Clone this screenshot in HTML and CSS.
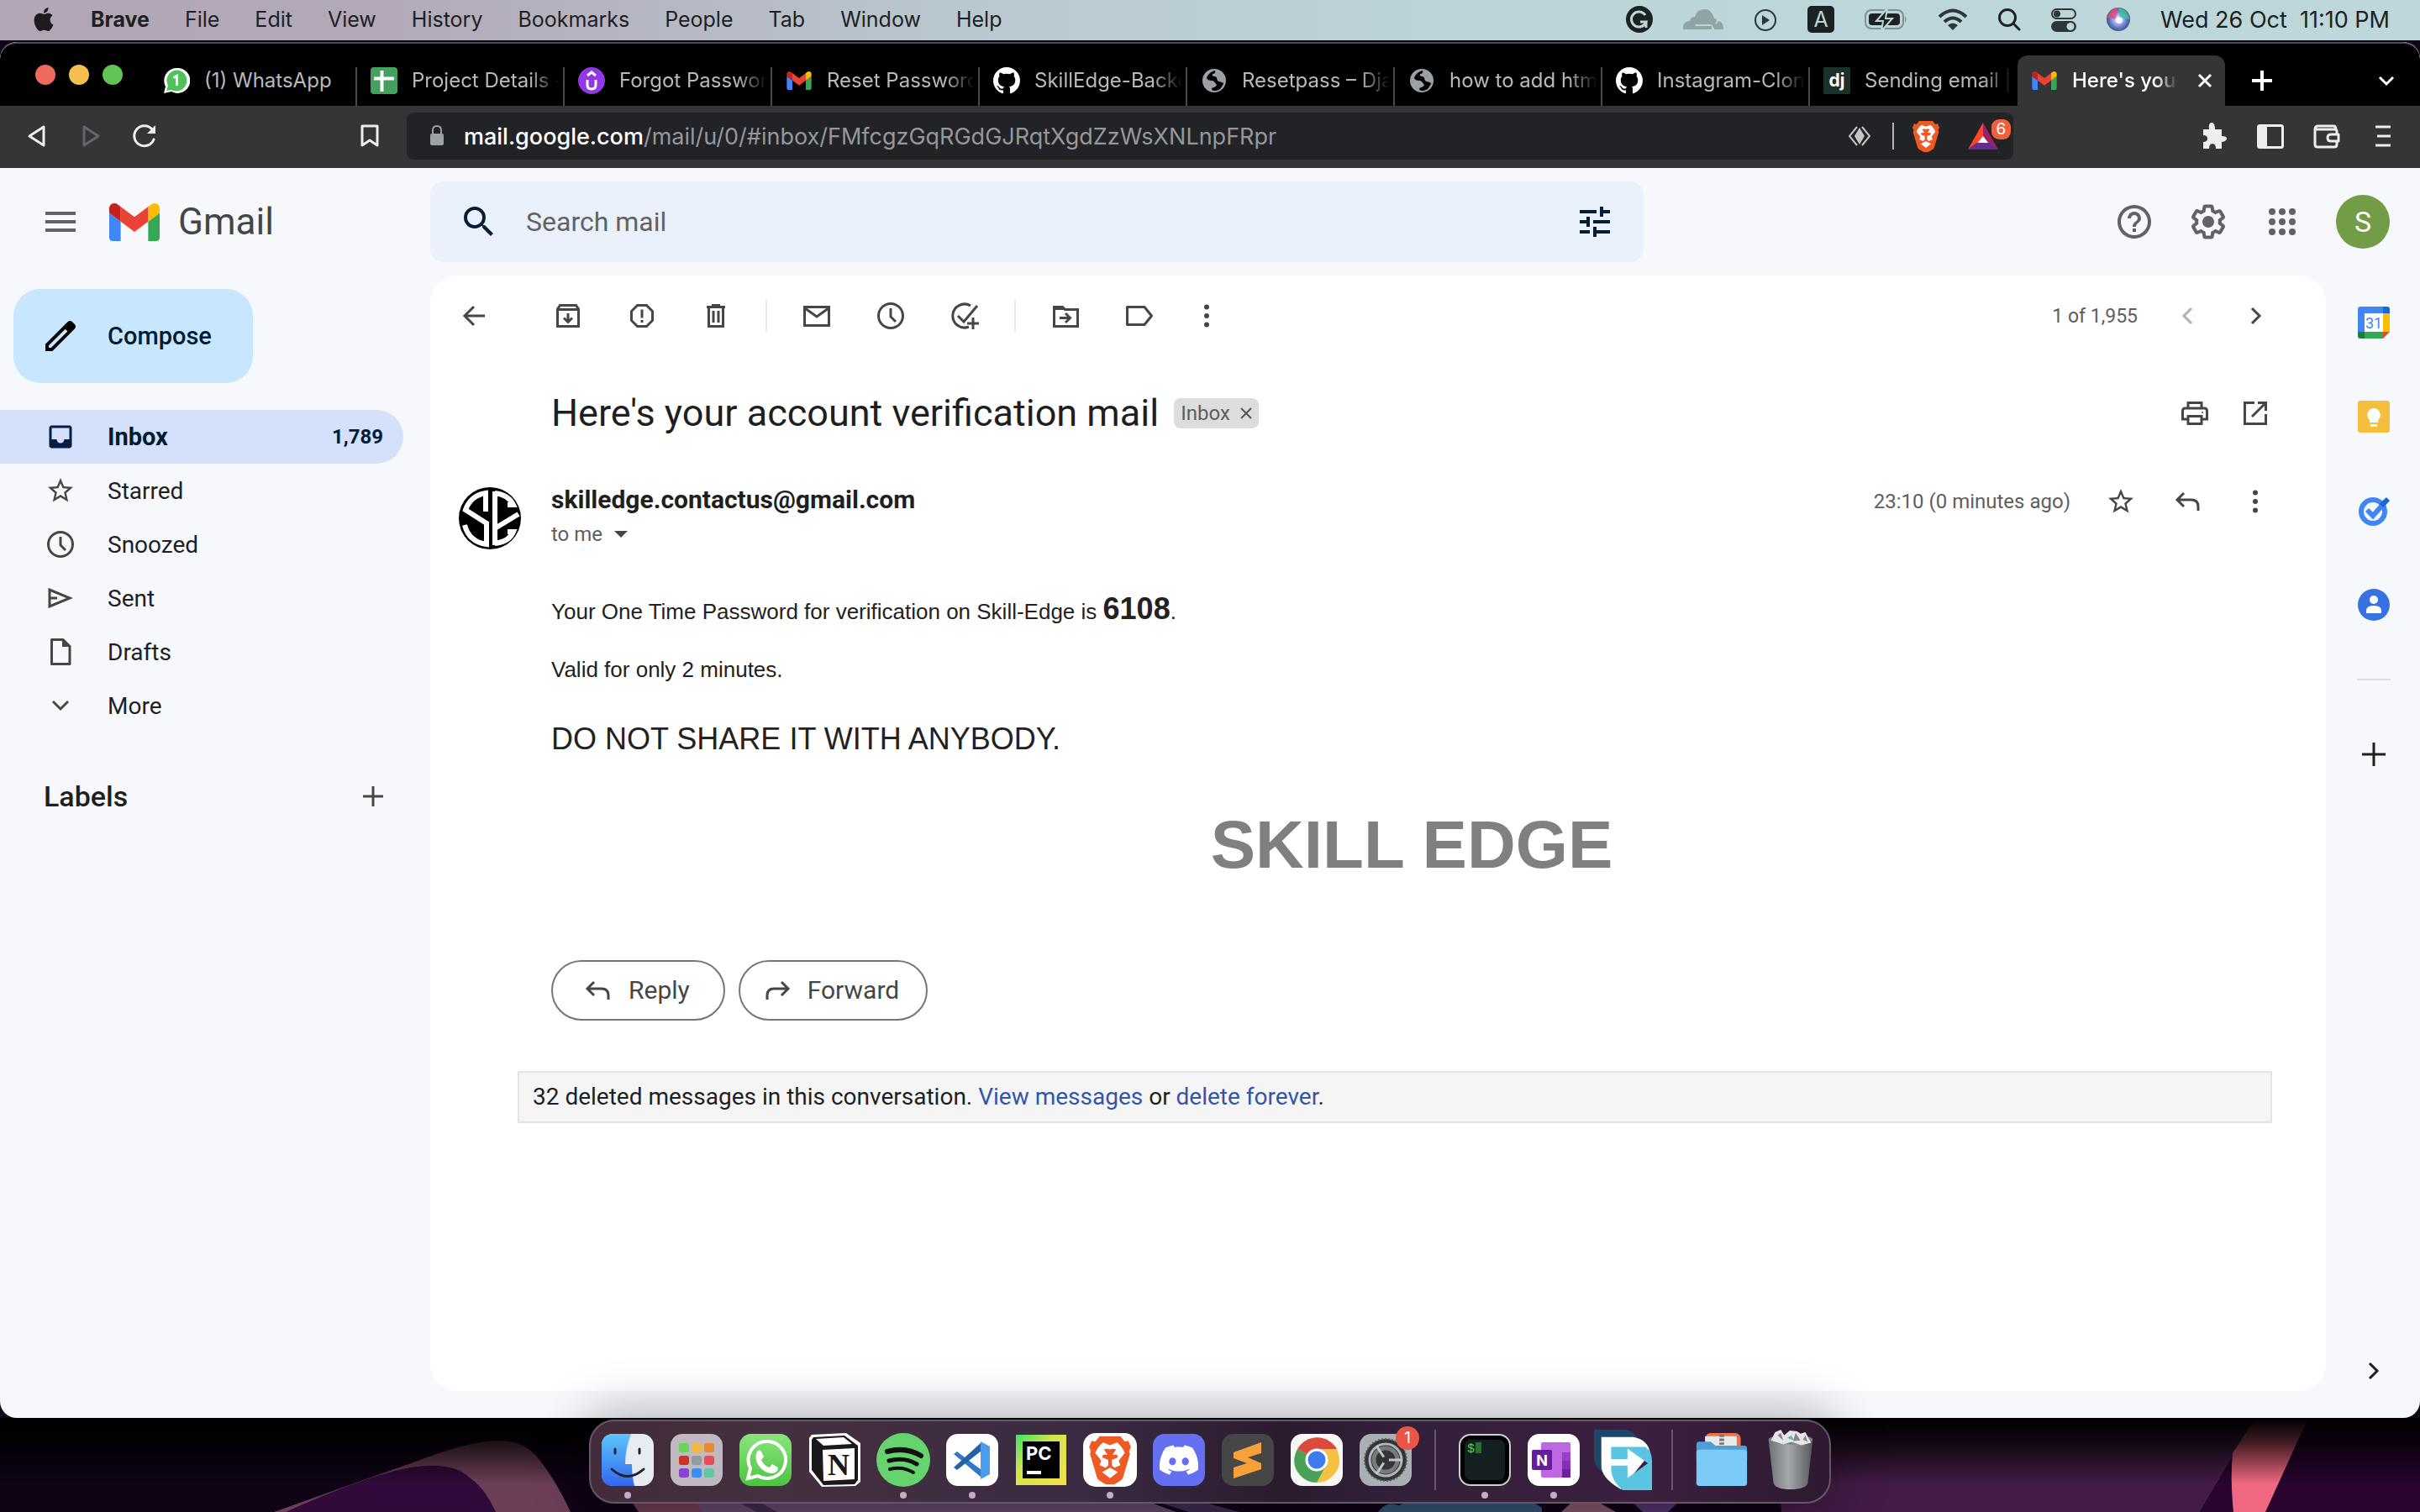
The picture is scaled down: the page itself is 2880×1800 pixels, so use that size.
FILE: index.html
```html
<!DOCTYPE html>
<html lang="en">
<head>
<meta charset="utf-8">
<title>Here's your account verification mail - Gmail</title>
<link rel="stylesheet" href="styles.css">
</head>
<body>
<svg class="defs" aria-hidden="true">
  <symbol id="gmail" viewBox="52 42 88 66"><path fill="#4285f4" d="M58 108h14V74L52 59v43c0 3.32 2.69 6 6 6"/><path fill="#34a853" d="M120 108h14c3.32 0 6-2.69 6-6V59l-20 15"/><path fill="#fbbc04" d="M120 48v26l20-15v-8c0-7.42-8.47-11.65-14.4-7.2"/><path fill="#ea4335" d="M72 74V48l24 18 24-18v26L96 92"/><path fill="#c5221f" d="M52 51v8l20 15V48l-5.6-4.2c-5.94-4.45-14.4-.22-14.4 7.2"/></symbol>
  <symbol id="github" viewBox="0 0 16 16"><path fill="#fff" d="M8 0C3.58 0 0 3.58 0 8c0 3.54 2.29 6.53 5.47 7.59.4.07.55-.17.55-.38 0-.19-.01-.82-.01-1.49-2.01.37-2.53-.49-2.69-.94-.09-.23-.48-.94-.82-1.13-.28-.15-.68-.52-.01-.53.63-.01 1.08.58 1.23.82.72 1.21 1.87.87 2.33.66.07-.52.28-.87.51-1.07-1.78-.2-3.64-.89-3.64-3.95 0-.87.31-1.59.82-2.15-.08-.2-.36-1.02.08-2.12 0 0 .67-.21 2.2.82.64-.18 1.32-.27 2-.27s1.36.09 2 .27c1.53-1.04 2.2-.82 2.2-.82.44 1.1.16 1.92.08 2.12.51.56.82 1.27.82 2.15 0 3.07-1.87 3.75-3.65 3.95.29.25.54.73.54 1.48 0 1.07-.01 1.93-.01 2.2 0 .21.15.46.55.38A8.01 8.01 0 0 0 16 8c0-4.42-3.58-8-8-8z"/></symbol>
  <symbol id="globe" viewBox="0 0 32 32"><circle cx="16" cy="16" r="14" fill="#9aa0a6"/><path fill="#000" d="M17 4c-5 1-9 5-10 9 2 3 4 3 7 3 3 1 3 3 5 5-1 3-4 3-6 4 0 2 1 3 3 3 4 0 8-2 9-5 1-2 2-2 2-4-2-2-5-1-7-3-1-2 0-4-3-5-2 0-4-1-3-3 2 0 4-1 3-4z"/></symbol>
  <symbol id="lion" viewBox="0 0 48 56"><path fill="#ee5a24" d="M12 1h24l5 6 4-1 3 7-2 5 1 3-8 27c-1 3-3 4-5 5l-10 6-10-6c-2-1-4-2-5-5L1 21l1-3-2-5 3-7 4 1z"/><path fill="#fff" d="M24 11l8-3c4 3 7 7 9 12l-7 9 2 5-7 3-3-3v-6l7-3-1-3h-5l4-6-4-1-3 1-3-1-4 1 4 6h-5l-1 3 7 3v6l-3 3-7-3 2-5-7-9c2-5 5-9 9-12z"/><path fill="#fff" d="M24 37l9 5-9 7-9-7z"/></symbol>
  <symbol id="star" viewBox="0 0 24 24"><path fill="currentColor" d="M22 9.24l-7.19-.62L12 2 9.19 8.63 2 9.24l5.46 4.73L5.82 21 12 17.27 18.18 21l-1.63-7.03L22 9.24zM12 15.4l-3.76 2.27 1-4.28-3.32-2.88 4.38-.38L12 6.1l1.71 4.04 4.38.38-3.32 2.88 1 4.28L12 15.4z"/></symbol>
  <symbol id="clock" viewBox="0 0 36 36"><g fill="none" stroke="currentColor" stroke-width="3"><circle cx="18" cy="18" r="14.5"/><path d="M18 9v10l6 6"/></g></symbol>
  <symbol id="dots" viewBox="0 0 36 36"><g fill="currentColor"><circle cx="18" cy="7.500" r="3"/><circle cx="18" cy="18" r="3"/><circle cx="18" cy="28.500" r="3"/></g></symbol>
  <symbol id="reply" viewBox="0 0 36 36"><path fill="none" stroke="currentColor" stroke-width="3" d="M13 8l-8 8 8 8M6 16h16q8 0 8 8v5"/></symbol>
</svg>

<header class="menubar">
  <nav class="menus" aria-label="Menu bar">
    <svg class="apple" viewBox="0 0 24 24"><path d="M12.152 6.896c-.948 0-2.415-1.078-3.96-1.04-2.04.027-3.91 1.183-4.961 3.014-2.117 3.675-.546 9.103 1.519 12.09 1.013 1.454 2.208 3.09 3.792 3.039 1.52-.065 2.09-.987 3.935-.987 1.831 0 2.35.987 3.96.948 1.637-.026 2.676-1.48 3.676-2.948 1.156-1.688 1.636-3.325 1.662-3.415-.039-.013-3.182-1.221-3.22-4.857-.026-3.04 2.48-4.494 2.597-4.559-1.429-2.09-3.623-2.324-4.39-2.376-2-.156-3.675 1.09-4.61 1.09zM15.53 3.83c.843-1.012 1.4-2.427 1.245-3.83-1.207.052-2.662.805-3.532 1.818-.78.896-1.454 2.338-1.273 3.714 1.338.104 2.715-.688 3.559-1.701"/></svg>
    <button class="app-name">Brave</button><button>File</button><button>Edit</button><button>View</button><button>History</button><button>Bookmarks</button><button>People</button><button>Tab</button><button>Window</button><button>Help</button>
  </nav>
  <div class="status">
    <svg width="32" height="32" viewBox="0 0 32 32"><circle cx="16" cy="16" r="16" fill="#1c2223"/><path fill="none" stroke="#bdd6d8" stroke-width="3" d="M23 11a9 9 0 1 0 1 8h-7M24 26v-7"/></svg>
    <svg width="48" height="32" viewBox="0 0 48 32"><path fill="#90a3a5" d="M0 28q-1-9 8-10 1-5 6-5 2-9 12-9 8 0 11 11 3 0 3 3l-2 3-4 1H15l-1 2h20v4zM37 28v-3q0-2 3-3l2-4q6 1 6 10zM32 22l3-1 1-4 2 4 3 1-3 1-2 4-1-4z"/></svg>
    <svg width="28" height="32" viewBox="0 0 28 32"><circle cx="14" cy="17" r="12" fill="none" stroke="#2c3637" stroke-width="2"/><path fill="#2c3637" d="M10 11l9 6-9 6z"/></svg>
    <svg width="32" height="32" viewBox="0 0 32 32"><rect width="32" height="32" rx="5" fill="#1c2223"/><text x="16" y="25" text-anchor="middle" font-size="25" fill="#bdd6d8">A</text></svg>
    <svg width="52" height="32" viewBox="0 0 52 32"><rect x="1" y="5" width="45" height="22" rx="7" fill="none" stroke="#7f9193" stroke-width="2"/><path d="M48 12q3 4 0 8z" fill="#7f9193"/><rect x="5" y="9" width="37" height="14" rx="4" fill="#1c2223"/><path fill="#1c2223" stroke="#bdd6d8" stroke-width="2" d="M27 3L14 18h8l-2 12 13-15h-8z"/></svg>
    <svg width="34" height="32" viewBox="0 0 34 32"><g fill="none" stroke="#2c3637" stroke-width="4"><path d="M1 13q16-15 32 0M7 19q10-9 20 0"/></g><path fill="#2c3637" d="M11 23q6-5 12 0l-6 6z"/></svg>
    <svg width="28" height="32" viewBox="0 0 28 32"><g fill="none" stroke="#1c2223" stroke-width="3" stroke-linecap="round"><circle cx="12" cy="14" r="9.500"/><path d="M19 21l7 7"/></g></svg>
    <svg width="30" height="32" viewBox="0 0 30 32"><rect x="1" y="4" width="28" height="11" rx="5.500" fill="none" stroke="#2c3637" stroke-width="2"/><circle cx="7" cy="9.500" r="4" fill="#2c3637"/><rect y="18" width="30" height="13" rx="6.500" fill="#2c3637"/><circle cx="23" cy="24.500" r="4.500" fill="#bdd6d8"/></svg>
    <svg width="28" height="32" viewBox="0 0 28 32"><defs><radialGradient id="siri"><stop offset="0" stop-color="#fff"/><stop offset=".35" stop-color="#b9b8ee"/><stop offset=".7" stop-color="#5b7fd0"/><stop offset="1" stop-color="#50507a"/></radialGradient></defs><circle cx="14" cy="16" r="14" fill="url(#siri)"/><path fill="#e8487c" opacity=".8" d="M1 14Q4 2 14 2q-1 8-4 14-3-2-9-2z"/><path fill="#38c6a0" opacity=".8" d="M14 2q12 2 13 14l-11-2z"/><circle cx="15" cy="17" r="4" fill="#fff" opacity=".8"/></svg>
    <time class="clock-text">Wed 26 Oct&nbsp; 11:10 PM</time>
  </div>
</header>

<main class="window">
  <div class="tabstrip">
    <div class="lights"><button class="red" aria-label="Close"></button><button class="yellow" aria-label="Minimise"></button><button class="green" aria-label="Zoom"></button></div>
    <nav class="tabs" aria-label="Tabs">
      <a class="tab" href="#"><svg viewBox="0 0 32 32"><path fill="#fff" d="M16 1a15 15 0 1 1-6 28L1 31l2-8A15 15 0 0 1 16 1z"/><path fill="#4fc35a" d="M16 3.500A12.500 12.500 0 1 1 10 27l-6 1 2-6A12.500 12.500 0 0 1 16 3.500z"/><path fill="none" stroke="#fff" stroke-width="3" d="M12.500 12.500l4-2V22"/></svg><span>(1) WhatsApp</span></a>
      <a class="tab" href="#"><svg viewBox="0 0 32 32"><rect width="32" height="32" rx="4" fill="#44a05f"/><path stroke="#fff" stroke-width="4" d="M13.500 4v25M4 13.500h24"/></svg><span>Project Details -</span></a>
      <a class="tab" href="#"><svg viewBox="0 0 32 32"><circle cx="16" cy="16" r="16" fill="#9237e4"/><path fill="none" stroke="#fff" stroke-width="3" d="M11 15v6q0 5 5 5t5-5v-6M11 10l5-4 5 4"/></svg><span>Forgot Password</span></a>
      <a class="tab" href="#"><svg viewBox="0 0 32 32"><use href="#gmail" x="1" y="5" width="30" height="22"/></svg><span>Reset Password</span></a>
      <a class="tab" href="#"><svg viewBox="0 0 32 32"><use href="#github" width="32" height="32"/></svg><span>SkillEdge-Backe</span></a>
      <a class="tab" href="#"><svg viewBox="0 0 32 32"><use href="#globe" width="32" height="32"/></svg><span>Resetpass – Dja</span></a>
      <a class="tab" href="#"><svg viewBox="0 0 32 32"><use href="#globe" width="32" height="32"/></svg><span>how to add html</span></a>
      <a class="tab" href="#"><svg viewBox="0 0 32 32"><use href="#github" width="32" height="32"/></svg><span>Instagram-Clone</span></a>
      <a class="tab last" href="#"><svg viewBox="0 0 32 32"><rect width="32" height="32" rx="2" fill="#1b322b"/><text x="16" y="23" text-anchor="middle" font-size="21" font-weight="700" fill="#fff">dj</text></svg><span>Sending email |</span></a>
      <a class="tab active" href="#"><svg viewBox="0 0 32 32"><use href="#gmail" x="1" y="5" width="30" height="22"/></svg><span>Here's your a</span><svg class="close" viewBox="0 0 20 20"><path stroke="#fff" stroke-width="3" d="M3 3l14 14M17 3L3 17"/></svg></a>
    </nav>
    <button class="newtab" aria-label="New tab"><svg width="26" height="26" viewBox="0 0 26 26"><path stroke="#fff" stroke-width="4" d="M13 1v24M1 13h24"/></svg></button>
    <button class="tabsearch" aria-label="Search tabs"><svg width="20" height="20" viewBox="0 0 20 20"><path fill="none" stroke="#fff" stroke-width="3" d="M2 6l8 8 8-8"/></svg></button>
  </div>

  <div class="navbar">
    <div class="navleft">
      <button aria-label="Back"><svg width="32" height="32" viewBox="0 0 32 32"><path fill="none" stroke="#eee" stroke-width="3" stroke-linejoin="round" d="M24 5v22L7 16z"/></svg></button>
      <button aria-label="Forward"><svg width="32" height="32" viewBox="0 0 32 32"><path fill="none" stroke="#64666e" stroke-width="3" stroke-linejoin="round" d="M8 5v22l17-11z"/></svg></button>
      <button aria-label="Reload"><svg width="32" height="32" viewBox="0 0 32 32"><path fill="none" stroke="#eee" stroke-width="3" stroke-linecap="round" d="M27 20A12 12 0 1 1 25 8"/><path fill="#eee" d="M29 3v10H19z"/></svg></button>
      <button class="bookmark" aria-label="Bookmark"><svg width="32" height="32" viewBox="0 0 32 32"><path fill="none" stroke="#eee" stroke-width="3" stroke-linejoin="round" d="M7 4h18v23l-9-6-9 6z"/></svg></button>
    </div>
    <div class="address">
      <svg width="20" height="28" viewBox="0 0 20 28"><path fill="none" stroke="#9aa0a6" stroke-width="2" d="M5 12V7q0-5 5-5t5 5v5"/><rect x="2" y="11" width="16" height="14" rx="2" fill="#9aa0a6"/></svg>
      <div class="url" role="textbox" aria-label="Address" contenteditable="true" spellcheck="false"><b>mail.google.com</b>/mail/u/0/#inbox/FMfcgzGqRGdGJRqtXgdZzWsXNLnpFRpr</div>
      <svg width="28" height="28" viewBox="0 0 28 28"><path fill="#c4c4c6" d="M14 4l6 10-6 10-6-10z"/><path fill="none" stroke="#c4c4c6" stroke-width="2" d="M11 3L2 14l9 11M17 3l9 11-9 11"/></svg>
      <i class="bar"></i>
      <svg class="shield" width="32" height="38"><use href="#lion" width="32" height="38"/></svg>
      <svg class="rewards" width="52" height="40" viewBox="0 0 52 40"><path fill="#fff" d="M18 10l10 22H8z"/><path fill="#ff4724" d="M18 4v16l-7 9-11 7z"/><path fill="#9e1f63" d="M18 4v16l7 9 11 7z"/><path fill="#662d91" d="M10 28h16l10 8H0z"/><rect x="28" y="0" width="23" height="24" rx="9" fill="#f0603c"/><text x="39.500" y="18" text-anchor="middle" font-size="19" fill="#fff">6</text></svg>
    </div>
    <div class="navright">
      <button aria-label="Extensions"><svg width="34" height="34" viewBox="0 0 34 34"><path fill="#eee" d="M4 9h7q-1-8 3-8t4 8h8v8q6 0 6 3t-6 4v8h-7q0-6-4-6t-4 6H4v-8q5 0 5-4t-5-4z"/></svg></button>
      <button aria-label="Sidebar"><svg width="34" height="34" viewBox="0 0 34 34"><rect x="2.500" y="4.500" width="29" height="26" rx="2" fill="none" stroke="#eee" stroke-width="3"/><path fill="#eee" d="M3 5h10v25H3z"/></svg></button>
      <button aria-label="Wallet"><svg width="34" height="34" viewBox="0 0 34 34"><path fill="none" stroke="#eee" stroke-width="3" stroke-linejoin="round" d="M3 8v19q0 3 3 3h20q3 0 3-3v-4M29 15v-4q0-2-3-2H3q0-4 4-4h18q3 0 3 4M31 15h-9q-4 0-4 4t4 4h9z"/></svg></button>
      <button aria-label="Menu"><svg width="34" height="34" viewBox="0 0 34 34"><path stroke="#eee" stroke-width="3" d="M8 6h18M10 17h16M8 28h18"/></svg></button>
    </div>
  </div>

  <div class="gmail">
    <div class="brand">
      <button aria-label="Main menu"><svg width="48" height="48" viewBox="0 0 24 24"><path fill="#5f6368" d="M3 18h18v-2H3v2zm0-5h18v-2H3v2zm0-7v2h18V6H3z"/></svg></button>
      <svg width="60" height="45"><use href="#gmail" width="60" height="45"/></svg>
      <span>Gmail</span>
    </div>
    <div class="topbar">
      <form class="search" role="search">
        <button type="button" aria-label="Search"><svg width="48" height="48" viewBox="0 0 24 24"><path fill="#041e35" d="M15.5 14h-.79l-.28-.27A6.471 6.471 0 0 0 16 9.500 6.500 6.500 0 1 0 9.500 16c1.610 0 3.090-.59 4.230-1.570l.27.28v.79l5 4.990L20.490 19l-4.990-5zm-6 0C7.010 14 5 11.990 5 9.500S7.010 5 9.500 5 14 7.010 14 9.500 11.990 14 9.500 14z"/></svg></button>
        <input type="text" placeholder="Search mail" aria-label="Search mail">
        <button type="button" aria-label="Search options"><svg width="48" height="48" viewBox="0 0 24 24"><path fill="#041e35" d="M3 17v2h6v-2H3zM3 5v2h10V5H3zm10 16v-2h8v-2h-8v-2h-2v6h2zM7 9v2H3v2h4v2h2V9H7zm14 4v-2H11v2h10zm-6-4h2V7h4V5h-4V3h-2v6z"/></svg></button>
      </form>
      <div class="account">
        <button aria-label="Help"><svg width="48" height="48" viewBox="0 0 24 24"><path fill="#5f6368" d="M11 18h2v-2h-2v2zm1-16C6.480 2 2 6.480 2 12s4.480 10 10 10 10-4.480 10-10S17.520 2 12 2zm0 18c-4.410 0-8-3.590-8-8s3.590-8 8-8 8 3.590 8 8-3.590 8-8 8zm0-14c-2.210 0-4 1.790-4 4h2c0-1.100.9-2 2-2s2 .9 2 2c0 2-3 1.750-3 5h2c0-2.250 3-2.500 3-5 0-2.210-1.790-4-4-4z"/></svg></button>
        <button aria-label="Settings"><svg width="48" height="48" viewBox="0 0 24 24" fill="#5f6368"><path d="M13.85 22.25h-3.7c-.74 0-1.36-.54-1.45-1.27l-.27-1.89c-.27-.14-.53-.29-.79-.46l-1.8.72c-.7.26-1.47-.03-1.81-.65L2.2 15.530c-.35-.66-.2-1.44.36-1.88l1.530-1.190c-.01-.15-.02-.3-.02-.46 0-.15.01-.31.02-.46l-1.520-1.190c-.59-.45-.74-1.260-.37-1.880l1.850-3.190c.34-.62 1.110-.9 1.790-.63l1.810.73c.26-.17.52-.32.78-.46l.27-1.910c.09-.7.71-1.250 1.440-1.250h3.7c.74 0 1.360.54 1.450 1.270l.27 1.890c.27.14.53.29.79.46l1.8-.72c.71-.26 1.480.03 1.820.65l1.840 3.180c.36.66.2 1.440-.36 1.880l-1.520 1.190c.01.15.02.3.02.46s-.01.31-.02.46l1.520 1.190c.56.45.72 1.230.37 1.860l-1.860 3.220c-.34.62-1.110.9-1.800.63l-1.800-.72c-.26.17-.52.32-.78.46l-.27 1.910c-.1.68-.72 1.220-1.460 1.220zm-3.230-2h2.760l.37-2.550.53-.22c.44-.18.88-.44 1.340-.78l.45-.34 2.380.96 1.380-2.4-2.030-1.580.07-.56c.03-.26.06-.51.06-.78s-.03-.53-.06-.78l-.07-.56 2.030-1.580-1.390-2.4-2.390.96-.45-.35c-.42-.32-.87-.58-1.330-.77l-.52-.22-.37-2.550h-2.760l-.37 2.550-.53.21c-.44.19-.88.44-1.340.79l-.45.33-2.380-.95-1.390 2.390 2.030 1.580-.07.56a7 7 0 0 0-.06.79c0 .26.02.53.06.78l.07.56-2.030 1.580 1.380 2.4 2.390-.96.45.35c.43.33.86.58 1.330.77l.53.22.38 2.550z"/><circle cx="12" cy="12" r="3.500"/></svg></button>
        <button aria-label="Google apps"><svg width="48" height="48" viewBox="0 0 24 24" fill="#5f6368"><circle cx="6" cy="6" r="2"/><circle cx="12" cy="6" r="2"/><circle cx="18" cy="6" r="2"/><circle cx="6" cy="12" r="2"/><circle cx="12" cy="12" r="2"/><circle cx="18" cy="12" r="2"/><circle cx="6" cy="18" r="2"/><circle cx="12" cy="18" r="2"/><circle cx="18" cy="18" r="2"/></svg></button>
        <button class="me" aria-label="Account">S</button>
      </div>
    </div>

    <aside class="sidebar">
      <button class="compose"><svg width="48" height="48" viewBox="0 0 24 24"><path d="M20.410 4.940l-1.350-1.350c-.78-.78-2.050-.78-2.830 0L3 16.820V21h4.180L20.410 7.770c.79-.78.79-2.050 0-2.830zm-14 14.120L5 19v-1.360l9.820-9.820 1.410 1.410-9.820 9.830z"/></svg>Compose</button>
      <nav class="folders" aria-label="Folders">
        <a class="current" href="#"><svg viewBox="0 0 24 24"><path fill="#041e49" d="M19 3H5c-1.100 0-2 .9-2 2v14c0 1.100.9 2 2 2h14c1.100 0 2-.9 2-2V5c0-1.100-.9-2-2-2zm0 11h-4c0 1.660-1.350 3-3 3s-3-1.340-3-3H5V5h14z"/></svg><span>Inbox</span><em>1,789</em></a>
        <a href="#"><svg viewBox="0 0 24 24"><use href="#star"/></svg><span>Starred</span></a>
        <a href="#"><svg viewBox="0 0 36 36"><use href="#clock"/></svg><span>Snoozed</span></a>
        <a href="#"><svg viewBox="0 0 36 36"><path fill="none" stroke="currentColor" stroke-width="3" d="M5 8v20l24-10zM5 18h9"/></svg><span>Sent</span></a>
        <a href="#"><svg viewBox="0 0 36 36"><path fill="none" stroke="currentColor" stroke-width="3" stroke-linejoin="round" d="M7.500 3.500H21l8 8v21H7.500z"/><path fill="currentColor" d="M20 3l9 9h-9z"/></svg><span>Drafts</span></a>
        <a href="#"><svg viewBox="0 0 36 36"><path fill="none" stroke="currentColor" stroke-width="3" d="M9 13l9 9 9-9"/></svg><span>More</span></a>
      </nav>
      <div class="labels"><h2>Labels</h2><button aria-label="Create label"><svg width="36" height="36" viewBox="0 0 36 36"><path stroke="#444746" stroke-width="3" d="M18 6v24M6 18h24"/></svg></button></div>
    </aside>

    <section class="card">
      <div class="toolbar">
        <button class="back" aria-label="Back to inbox"><svg viewBox="0 0 36 36"><path d="M18 7L7 18l11 11M7 18h24"/></svg></button>
        <button aria-label="Archive"><svg viewBox="0 0 36 36"><path d="M5.500 10l3-4.500h19l3 4.500v20.500h-25zM5 10.500h26M18 15v10M13 20.500l5 5 5-5"/></svg></button>
        <button aria-label="Report spam"><svg viewBox="0 0 36 36"><path d="M12.500 5.500h11l7 7v11l-7 7h-11l-7-7v-11zM18 10.500v10M18 23v3"/></svg></button>
        <button aria-label="Delete"><svg viewBox="0 0 36 36"><path d="M9.500 9v21.500h17V9M7 7.500h22M13 5.500h10M15 12v14M21 12v14"/></svg></button>
        <i></i>
        <button aria-label="Mark as unread"><svg viewBox="0 0 36 36"><path d="M3.500 7.500h29v22h-29zM4 9l14 10L32 9"/></svg></button>
        <button aria-label="Snooze"><svg viewBox="0 0 36 36"><use href="#clock"/></svg></button>
        <button aria-label="Add to tasks"><svg viewBox="0 0 36 36"><path d="M25 6A14 14 0 1 0 23 31M10 18l7 7L33 6M28 20v14M21 27h14"/></svg></button>
        <i></i>
        <button aria-label="Move to"><svg viewBox="0 0 36 36"><path d="M4.500 7.500h10l3 3h15v20h-28zM11 20.500h12M18 15l5.500 5.500L18 26"/><path class="solid" d="M4 7h11l3 4H4z"/></svg></button>
        <button aria-label="Labels"><svg viewBox="0 0 36 36"><path stroke-linejoin="round" d="M3.500 7.500H24L32.500 18 24 28.500H3.500z"/></svg></button>
        <button class="more" aria-label="More"><svg viewBox="0 0 36 36"><use href="#dots"/></svg></button>
        <span class="count">1 of 1,955</span>
        <button class="pager dim" aria-label="Newer"><svg viewBox="0 0 36 36"><path d="M22 9l-9 9 9 9"/></svg></button>
        <button class="pager" aria-label="Older"><svg viewBox="0 0 36 36"><path d="M14 9l9 9-9 9"/></svg></button>
      </div>

      <div class="subject">
        <h1>Here's your account verification mail</h1>
        <button class="chip">Inbox <svg viewBox="0 0 14 14"><path stroke="#555" stroke-width="2" d="M1 1l12 12M13 1L1 13"/></svg></button>
        <div class="tools">
          <button aria-label="Print"><svg viewBox="0 0 36 36"><path d="M10 12V5.500h16V12M9 25H3.500V15q0-3 3-3h23q3 0 3 3v10H27M10 21.500h16v9H10z"/><circle class="solid" cx="27" cy="17" r="1"/></svg></button>
          <button aria-label="Open in new window"><svg viewBox="0 0 36 36"><path d="M17 5.500H5.500v25h25V19M21 5.500h9.500V15M30 6L14 22"/></svg></button>
        </div>
      </div>

      <article class="message">
        <div class="avatar"><svg width="74" height="74" viewBox="0 0 74 74"><circle cx="37" cy="37" r="37"/><g fill="none" stroke="#fff" stroke-width="6"><path d="M32 29V7Q14 10 8 27l25 16v25Q12 65 7 45"/><path d="M43 5v64M43 7q16 2 22 14h-7M71 32L43 49M43 67q17-2 22-14h-7"/></g></svg></div>
        <div class="sender">
          <h3>skilledge.contactus@gmail.com</h3>
          <button>to me <svg viewBox="0 0 16 8"><path fill="#444746" d="M0 0h16L8 8z"/></svg></button>
        </div>
        <div class="meta">
          <time>23:10 (0 minutes ago)</time>
          <button aria-label="Star"><svg viewBox="0 0 24 24"><use href="#star"/></svg></button>
          <button aria-label="Reply"><svg viewBox="0 0 36 36"><use href="#reply"/></svg></button>
          <button aria-label="More"><svg viewBox="0 0 36 36"><use href="#dots"/></svg></button>
        </div>
        <div class="body">
          <p>Your One Time Password for verification on Skill-Edge is <b>6108</b>.</p>
          <p class="valid">Valid for only 2 minutes.</p>
          <p class="warn">DO NOT SHARE IT WITH ANYBODY.</p>
          <h2>SKILL EDGE</h2>
          <div class="actions">
            <button><svg viewBox="0 0 36 36"><use href="#reply"/></svg>Reply</button>
            <button><svg viewBox="0 0 36 36"><path d="M23 8l8 8-8 8M30 16H14q-8 0-8 8v5"/></svg>Forward</button>
          </div>
        </div>
      </article>
      <p class="notice">32 deleted messages in this conversation. <a href="#">View messages</a> or <a href="#">delete forever</a>.</p>
    </section>

    <aside class="addons">
      <button aria-label="Calendar"><svg width="40" height="40" viewBox="0 0 40 40"><path fill="#4285f4" d="M4 1h27v8H9v22H1V4q0-3 3-3z"/><path fill="#1967d2" d="M31 1h5q3 0 3 3v5h-8z"/><path fill="#fbbc04" d="M31 9h8v22h-8z"/><path fill="#34a853" d="M9 31h22v8H9z"/><path fill="#188038" d="M1 31h8v8H4q-3 0-3-3z"/><path fill="#ea4335" d="M31 31h8l-8 8z"/><path fill="#fff" d="M9 9h22v22H9z"/><text x="20" y="27" text-anchor="middle" font-size="18" fill="#4285f4">31</text></svg></button>
      <button aria-label="Keep"><svg width="40" height="40" viewBox="0 0 40 40"><rect x="1" y="1" width="38" height="38" rx="3" fill="#f4be3e"/><path fill="#fff" d="M20 10a8 8 0 0 1 5 14v3H15v-3a8 8 0 0 1 5-14zM16 29h8v3h-8z"/></svg></button>
      <button aria-label="Tasks"><svg width="40" height="40" viewBox="0 0 40 40"><circle cx="19" cy="21" r="14" fill="none" stroke="#4285f4" stroke-width="6"/><path fill="none" stroke="#4285f4" stroke-width="6" d="M12 19l7 7L34 9"/><path stroke="#1967d2" stroke-width="6" d="M29 14l8-8"/></svg></button>
      <button aria-label="Contacts"><svg width="40" height="40" viewBox="0 0 40 40"><circle cx="20" cy="20" r="19" fill="#3872e0"/><circle cx="20" cy="14" r="5" fill="#fff"/><path fill="#fff" d="M11 30v-3q0-6 9-6t9 6v3z"/></svg></button>
      <hr>
      <button class="add" aria-label="Get add-ons"><svg width="36" height="36" viewBox="0 0 36 36"><path stroke="#1f1f1f" stroke-width="3" d="M18 4v28M4 18h28"/></svg></button>
      <button class="hide" aria-label="Hide side panel"><svg width="36" height="36" viewBox="0 0 36 36"><path fill="none" stroke="#1f1f1f" stroke-width="3" d="M13 9l9 9-9 9"/></svg></button>
    </aside>
  </div>
</main>

<footer class="desktop">
  <svg class="wallpaper" viewBox="0 0 2880 112" preserveAspectRatio="none">
    <defs><linearGradient id="shade" x2="0" y2="1"><stop offset="0" stop-color="#000"/><stop offset=".25" stop-color="#000" stop-opacity=".75"/><stop offset=".7" stop-opacity="0"/></linearGradient></defs>
    <rect width="2880" height="112" fill="#0f0316"/>
    <path fill="#6d3e58" d="M326 112L500 50Q560 27 595 27 625 27 642 50 662 75 679 112z"/><path fill="#300a3a" d="M340 112Q420 76 470 63 535 47 560 72 578 85 590 112z"/>
    <path fill="#6b3c50" d="M745 90h90l15 22H760z"/><path fill="#5f4566" d="M820 90h520l60 22H835z"/><path fill="#3c2a4c" d="M860 90h25l40 22h-25zM1345 90h50l80 22h-60z"/>
    <path fill="#33506f" d="M1640 112q10-14 25-8 20-12 35-2 20-12 40-3 22-12 45 0 30-8 50 8v5z"/><path fill="#7d5366" d="M1858 112l15-14h25l25 14z"/><path fill="#50306a" d="M1940 98h60l-15 14h-30z"/>
    <path fill="#421c45" d="M2110 0h574l-66 112H2120z"/><path fill="#28042f" d="M2684 0h196v112H2618z"/><path fill="#ef6780" d="M2684 0h63l-51 112h-38q-4-40-1-70z"/>
    <rect width="2880" height="112" fill="url(#shade)"/>
  </svg>
  <nav class="dock" aria-label="Dock">
    <button class="run" aria-label="Finder"><svg viewBox="0 0 64 64"><defs><linearGradient id="fb" x2="0" y2="1"><stop stop-color="#5cc6fa"/><stop offset="1" stop-color="#3466ee"/></linearGradient></defs><rect x="1" y="1" width="62" height="62" rx="14" fill="#e7ebf2"/><path fill="url(#fb)" d="M15 1h21q-7 18-7 36h8q0 14 3 26H15Q1 63 1 49V15Q1 1 15 1z"/><path fill="none" stroke="#1c2430" stroke-width="3" stroke-linecap="round" d="M17 19v5M46 19v5M13 43q19 17 38 0"/></svg></button>
    <button aria-label="Launchpad"><svg viewBox="0 0 64 64"><rect x="1" y="1" width="62" height="62" rx="14" fill="#c1b9c1"/><rect x="11" y="12" width="12" height="11" rx="3" fill="#6bd457"/><rect x="26" y="12" width="12" height="11" rx="3" fill="#f4b93c"/><rect x="41" y="12" width="12" height="11" rx="3" fill="#e58b33"/><rect x="11" y="27" width="12" height="11" rx="3" fill="#ce3328"/><rect x="26" y="27" width="12" height="11" rx="3" fill="#959b9d"/><rect x="41" y="27" width="12" height="11" rx="3" fill="#ea4a5e"/><rect x="11" y="42" width="12" height="11" rx="3" fill="#8b43cf"/><rect x="26" y="42" width="12" height="11" rx="3" fill="#3690ef"/><rect x="41" y="42" width="12" height="11" rx="3" fill="#62c6a4"/></svg></button>
    <button aria-label="WhatsApp"><svg viewBox="0 0 64 64"><defs><linearGradient id="wg" x2="0" y2="1"><stop stop-color="#8ae57c"/><stop offset="1" stop-color="#4cc341"/></linearGradient></defs><rect x="1" y="1" width="62" height="62" rx="14" fill="url(#wg)"/><path fill="none" stroke="#fff" stroke-width="4" d="M33 10a22 22 0 1 1-10 41l-12 3 3-12A22 22 0 0 1 33 10z"/><path fill="#fff" d="M22 22q3-3 5 0l3 6-3 4q3 7 10 9l3-4 7 4q0 6-7 7-9 0-16-9-6-9-2-17z"/></svg></button>
    <button aria-label="Notion"><svg viewBox="0 0 64 64"><path fill="#fff" d="M5 2L46 0l17 12v46l-6 5-40 1L2 46V6z"/><path fill="#191919" d="M7 5l37-2 16 12v41l-4 5-37 1L5 44V8z"/><path fill="#fff" d="M10 7l33-2 10 8-34 2zM18 20l38-2v37l-37 2z"/><text x="37" y="50" text-anchor="middle" class="serif" font-size="36" font-weight="700" fill="#191919">N</text></svg></button>
    <button class="run" aria-label="Spotify"><svg viewBox="0 0 64 64"><circle cx="32" cy="32" r="32" fill="#65d46e"/><g fill="none" stroke="#111" stroke-linecap="round"><path stroke-width="6" d="M13 22q22-6 40 5"/><path stroke-width="5" d="M15 33q18-5 33 4"/><path stroke-width="4" d="M16 43q15-4 28 4"/></g></svg></button>
    <button class="run" aria-label="Code"><svg viewBox="0 0 64 64"><rect x="1" y="1" width="62" height="62" rx="14" fill="#fff"/><path fill="#3178c6" d="M10 25l4-3 29 22v9z"/><path fill="#2561a4" d="M10 41l4 3 29-23V11z"/><path fill="#4a9dea" d="M42 10l11 6v33l-11 6z"/></svg></button>
    <button aria-label="PyCharm"><svg viewBox="0 0 64 64"><defs><linearGradient id="pc" x2="1" y2="1"><stop stop-color="#3be36b"/><stop offset=".4" stop-color="#d5e34b"/><stop offset="1" stop-color="#f5e04b"/></linearGradient></defs><path fill="url(#pc)" d="M2 2h60v60H2z"/><path d="M10 10h44v44H10z"/><text x="14" y="32" font-size="22" font-weight="700" fill="#fff">PC</text><path fill="#fff" d="M15 45h17v4H15z"/></svg></button>
    <button class="run" aria-label="Brave"><svg viewBox="0 0 64 64"><rect width="64" height="64" rx="15" fill="#fff"/><use href="#lion" x="7" y="3" width="50" height="58"/></svg></button>
    <button aria-label="Discord"><svg viewBox="0 0 64 64"><rect x="1" y="1" width="62" height="62" rx="14" fill="#6570f0"/><path fill="#fff" transform="translate(9 9) scale(1.920)" d="M20.317 4.370a19.791 19.791 0 00-4.885-1.515.074.074 0 00-.079.037c-.211.375-.445.865-.608 1.250-1.845-.276-3.680-.276-5.487 0-.164-.393-.406-.874-.618-1.250a.077.077 0 00-.079-.037 19.736 19.736 0 00-4.885 1.515.070.070 0 00-.032.028C.533 9.046-.319 13.580.099 18.058a.082.082 0 00.031.056c2.053 1.508 4.041 2.423 5.993 3.029a.078.078 0 00.084-.028c.462-.630.873-1.295 1.226-1.994a.076.076 0 00-.042-.106c-.653-.248-1.274-.550-1.872-.892a.077.077 0 01-.008-.128c.126-.094.252-.192.372-.291a.074.074 0 01.078-.011c3.928 1.793 8.180 1.793 12.061 0a.074.074 0 01.079.010c.120.099.246.198.373.292a.077.077 0 01-.007.128 12.299 12.299 0 01-1.873.891.077.077 0 00-.041.107c.360.698.772 1.363 1.225 1.993a.076.076 0 00.084.029c1.961-.607 3.950-1.522 6.002-3.029a.077.077 0 00.031-.055c.500-5.177-.838-9.674-3.549-13.660a.061.061 0 00-.031-.029zM8.020 15.331c-1.183 0-2.157-1.086-2.157-2.419 0-1.333.956-2.419 2.157-2.419 1.211 0 2.176 1.095 2.157 2.419 0 1.333-.956 2.419-2.157 2.419zm7.975 0c-1.183 0-2.157-1.086-2.157-2.419 0-1.333.955-2.419 2.157-2.419 1.211 0 2.176 1.095 2.157 2.419 0 1.333-.946 2.419-2.157 2.419z"/></svg></button>
    <button aria-label="Sublime Text"><svg viewBox="0 0 64 64"><rect x="1" y="1" width="62" height="62" rx="14" fill="#464646"/><path fill="#f7a13a" d="M15 23l33-12v13l-16 5 16 7v7L15 54V41l16-5-16-6z"/></svg></button>
    <button aria-label="Chrome"><svg viewBox="0 0 64 64"><rect x="1" y="1" width="62" height="62" rx="14" fill="#f7f7f5"/><path fill="#dc4a3d" d="M32 32L9 19A27 27 0 0 1 56 19z"/><path fill="#f4c142" d="M32 19h24q9 21-8 35-7 5-16 5l11-20z"/><path fill="#4ba159" d="M9 19q-9 17 3 31 8 9 20 9l11-20-11-7z"/><circle cx="32" cy="32" r="13.500" fill="#fff"/><circle cx="32" cy="32" r="10.500" fill="#3d7cea"/></svg></button>
    <button class="badged" aria-label="System Preferences"><svg viewBox="0 0 64 64"><rect x="1" y="1" width="62" height="62" rx="14" fill="#a9b0b4"/><circle cx="32" cy="32" r="25" fill="#333537" stroke="#5c5f61" stroke-width="2" stroke-dasharray="2 2"/><circle cx="32" cy="32" r="19" fill="none" stroke="#b1b5b7" stroke-width="3"/><circle cx="32" cy="32" r="14" fill="none" stroke="#777b7d" stroke-width="5"/><path stroke="#c2c6c8" stroke-width="3" d="M32 32L21 15M32 32h20M32 32L21 49"/><circle cx="32" cy="32" r="4" fill="#333"/></svg><span class="badge">1</span></button>
    <i></i>
    <button class="run" aria-label="Terminal"><svg viewBox="0 0 64 64"><rect x="1" y="1" width="62" height="62" rx="14" fill="#c8d0d4"/><rect x="3" y="3" width="58" height="58" rx="12"/><rect x="8" y="8" width="48" height="48" rx="7" fill="#151e20"/><text x="11" y="23" class="mono" font-size="15" fill="#56d353">$</text><path fill="#2c6f2b" d="M21 11h7v13h-7z"/></svg></button>
    <button class="run" aria-label="OneNote"><svg viewBox="0 0 64 64"><rect x="1" y="1" width="62" height="62" rx="14" fill="#fff"/><rect x="17" y="11" width="35" height="42" rx="2" fill="#bf67e2"/><path fill="#9a3fc9" d="M42 23h10v10H42z"/><path fill="#8330b8" d="M42 33h10v10H42z"/><path fill="#6e20a0" d="M42 43h10v10H42z"/><rect x="6" y="20" width="24" height="24" rx="2" fill="#641d9e"/><text x="18" y="39" text-anchor="middle" font-size="18" font-weight="700" fill="#fff">N</text></svg></button>
    <button aria-label="Remote transfer"><svg class="large" viewBox="0 0 72 76"><path fill="#1c4569" d="M1 1h40q10 2 16 16L22 60Q2 50 1 36z"/><path fill="#fff" d="M10 10h39q18 3 21 20L34 74Q9 60 10 44z"/><path fill="#59c5e3" d="M22 22h42q8 6 8 16v37H36q-14-12-14-26v-4h20v15l25-18-25-18v13H22z"/></svg></button>
    <i></i>
    <button aria-label="Downloads"><svg viewBox="0 0 66 68"><rect x="12" y="0" width="45" height="30" rx="7" fill="#ef7148"/><path fill="#e9e9e9" d="M12 4h40v20H12z"/><path stroke="#777" stroke-width="6" stroke-dasharray="3 2" d="M33 2v20"/><path fill="#4d9fd7" d="M4 11h15l6 5h37q3 0 3 4v14H1V15q0-4 3-4z"/><rect x="1" y="21" width="64" height="46" rx="4" fill="#7bcaf8"/></svg></button>
    <button aria-label="Trash"><svg class="large" viewBox="0 0 64 76"><defs><linearGradient id="tr"><stop stop-color="#6d7274"/><stop offset=".45" stop-color="#a5a8aa"/><stop offset="1" stop-color="#55595b"/></linearGradient></defs><path fill="url(#tr)" d="M5 13h54l-6 53q-2 8-21 8t-21-8z"/><ellipse cx="32" cy="13" rx="27" ry="6" fill="#7c8082"/><path fill="#e6e6e6" d="M8 14l5-10 7-3 4 7 7-6 9 1 4 3 6-2 7 13-12 3-12-4-10 3z"/><path fill="#868686" d="M16 8l4-3 3 9zM38 5l6 9-9 1zM50 8l3 8-6-3z"/><path fill="#5bb0d8" d="M28 11l5-3 3 6z"/></svg></button>
  </nav>
</footer>
</body>
</html>
```
FILE: styles.css
```css
* { box-sizing: border-box; }
body {
  margin: 0;
  min-height: 100vh;
  display: flex;
  flex-direction: column;
  background: #120419;
  color: #1f1f1f;
  font-family: Roboto, "Liberation Sans", sans-serif;
  font-size: 28px;
  overflow-x: hidden;
}
button { margin: 0; padding: 0; border: 0; background: none; font: inherit; color: inherit; display: flex; align-items: center; justify-content: center; }
a { color: inherit; text-decoration: none; }
h1, h2, h3, p { margin: 0; font-weight: 400; }
svg { flex: none; display: block; }
.defs { width: 0; height: 0; position: absolute; }

/* System menu bar */
.menubar {
  height: 48px;
  display: flex;
  justify-content: space-between;
  align-items: center;
  padding: 0 36px 2px 38px;
  background: linear-gradient(90deg, #b2a6b6 0, #b3a9b9 16%, #b9c8cf 40%, #bcd5d8 62%, #bdd7da 100%);
  font-family: Inter, sans-serif;
  font-size: 25px;
  color: #1c2223;
}
.menus, .status { display: flex; align-items: center; }
.menus { gap: 42px; }
.apple { width: 28px; height: 30px; fill: #1d1b20; }
.app-name { font-weight: 700; }
.status { gap: 36px; }
.clock-text { font-size: 27px; white-space: pre; }

/* Browser window */
.window {
  flex: 1;
  display: flex;
  flex-direction: column;
  margin-top: 2px;
  border-radius: 20px;
  overflow: hidden;
  background: #f6f8fc;
}
.tabstrip {
  height: 76px;
  display: flex;
  background: #000;
  border-top: 2px solid #4b5152;
  border-radius: 20px 20px 0 0;
  font-family: Inter, sans-serif;
  font-size: 24px;
}
.lights { width: 178px; flex: none; display: flex; gap: 16px; padding: 25px 0 0 42px; }
.lights button { width: 24px; height: 24px; border-radius: 50%; }
.red { background: #ed6a5e; }
.yellow { background: #f5bf4f; }
.green { background: #61c554; }
.tabs { flex: 0 1 2470px; display: grid; grid-template-columns: repeat(10, minmax(0, 1fr)); align-items: end; }
.tab {
  height: 60px;
  display: flex;
  align-items: center;
  gap: 17px;
  padding-left: 16px;
  color: #b9b9b9;
}
.tab svg { width: 32px; height: 32px; }
.tab span {
  flex: 1;
  min-width: 0;
  overflow: hidden;
  white-space: nowrap;
  line-height: 32px;
  margin-right: 6px;
  -webkit-mask-image: linear-gradient(90deg, #000 80%, transparent);
  mask-image: linear-gradient(90deg, #000 80%, transparent);
}
.tab:first-child span { -webkit-mask-image: none; mask-image: none; }
.tab:not(.active):not(.last) { background: linear-gradient(#4a4a4a, #4a4a4a) right bottom / 2px 46px no-repeat; }
.active { background: #353535; color: #fff; border-radius: 12px 12px 0 0; padding-right: 14px; font-weight: 500; }
.tab .close { width: 20px; height: 20px; }
.newtab { width: 88px; padding-top: 14px; }
.tabsearch { margin-left: auto; width: 80px; padding-top: 14px; }
.navbar { height: 74px; display: flex; align-items: center; background: #353535; padding-bottom: 2px; }
.navleft { width: 484px; flex: none; display: flex; padding-left: 12px; }
.navleft button { width: 64px; height: 56px; }
.navleft .bookmark { margin-left: auto; margin-right: 12px; }
.address {
  flex: 1;
  max-width: 1912px;
  min-width: 0;
  height: 56px;
  display: flex;
  align-items: center;
  background: #222326;
  border-radius: 8px;
  padding: 0 2px 0 26px;
  font-family: Inter, sans-serif;
}
.url { flex: 1; min-width: 0; padding-left: 22px; font-size: 27px; color: #96979a; white-space: nowrap; outline: 0; overflow: hidden; }
.url b { font-weight: 500; color: #fff; }
.bar { width: 2px; height: 32px; background: #b5b5b5; margin: 0 22px 0 25px; }
.shield { margin-right: 34px; }
.navright { margin-left: auto; display: flex; padding-right: 11px; }
.navright button { width: 67px; height: 56px; }

/* Gmail frame */
.gmail { flex: 1; display: grid; grid-template-columns: 512px minmax(0, 1fr) 112px; grid-template-rows: 128px 1fr; }
.brand { display: flex; align-items: center; padding-left: 48px; font-size: 44px; color: #444746; }
.brand button { margin-right: 34px; }
.brand span { margin-left: 22px; }
.topbar { grid-column: 2 / 4; display: flex; align-items: center; justify-content: space-between; }
.search { flex: 0 1 1444px; height: 96px; display: flex; align-items: center; background: #eaf1fb; border-radius: 16px; padding: 0 34px; }
.search input { flex: 1; min-width: 0; margin-left: 32px; border: 0; background: none; outline: 0; padding: 0; font: 32px Roboto, sans-serif; }
.search input::placeholder { color: #5f6368; opacity: 1; }
.account { display: flex; align-items: center; padding-right: 36px; }
.account button { width: 88px; }
.account .me { width: 64px; height: 64px; margin-left: 20px; border-radius: 50%; background: #729c45; color: #fff; font-size: 34px; }

.compose { width: 285px; height: 112px; margin: 16px 0 32px 16px; padding-left: 32px; justify-content: flex-start; gap: 32px; border-radius: 32px; background: #c8e6fd; color: #001d35; font-size: 29px; font-weight: 500; }
.folders a { display: flex; align-items: center; width: 480px; height: 64px; padding: 0 24px 0 54px; }
.folders svg { width: 36px; height: 36px; margin-right: 38px; color: #444746; }
.folders .current { background: #d5e1fb; border-radius: 0 32px 32px 0; font-size: 29px; font-weight: 700; color: #001d35; }
.folders em { margin-left: auto; font-style: normal; font-size: 24px; }
.labels { display: flex; align-items: center; justify-content: space-between; height: 64px; width: 462px; margin-top: 44px; padding-left: 52px; }
.labels h2 { font-size: 34px; font-weight: 500; }

/* Conversation card */
.card { background: #fff; border-radius: 32px; margin-bottom: 32px; padding-right: 64px; color: #1f1f1f; }
.card button { color: #444746; }
.card button svg { width: 36px; height: 36px; fill: none; stroke: currentColor; stroke-width: 3px; }
.card button svg use { stroke: none; }
.card .solid { fill: currentColor; stroke: none; }
.toolbar { display: flex; align-items: center; height: 96px; margin-right: -20px; padding-left: 8px; }
.toolbar button { width: 88px; height: 64px; }
.toolbar .back { margin-right: 24px; }
.toolbar i { width: 2px; height: 40px; margin: 0 15px; background: #e8eaed; }
.toolbar .more { width: 72px; }
.count { margin-left: auto; margin-right: 20px; font-size: 23px; color: #5e5e5e; }
.toolbar .pager { width: 80px; }
.toolbar .dim { color: #b0b1b1; }

.subject { display: flex; align-items: center; height: 72px; margin: 32px -16px 0 0; padding-left: 144px; }
.subject h1 { font-size: 45px; line-height: 52px; }
.subject .chip { height: 36px; margin-left: 18px; padding: 0 8px; gap: 12px; border-radius: 8px; background: #ddd; color: #5e5e5e; font-size: 24px; }
.subject .chip svg { width: 14px; height: 14px; }
.tools { display: flex; margin-left: auto; }
.tools button { width: 72px; height: 64px; }

.message { display: grid; grid-template-columns: 144px 1fr auto; margin-top: 46px; }
.avatar { padding: 6px 0 0 34px; }
.sender h3 { font-size: 30px; line-height: 42px; font-weight: 700; }
.sender button { height: 40px; gap: 14px; font-size: 24px; color: #5e5e5e; }
.sender button svg { width: 16px; height: 8px; stroke: none; }
.meta { display: flex; align-items: center; height: 46px; margin-right: -20px; font-size: 24px; color: #5e5e5e; }
.meta time { margin-right: 20px; }
.meta button { width: 80px; height: 40px; }
.body { grid-column: 2 / 4; margin-top: 49px; font-family: "Liberation Sans", Arial, sans-serif; font-size: 26px; line-height: 40px; color: #222; }
.body b { font-size: 36px; }
.valid { margin-top: 29px; }
.warn { margin-top: 43px; font-size: 36px; }
.body h2 { margin: 58px 0 89px; font-size: 80px; line-height: 96px; font-weight: 700; color: #808080; text-align: center; }
.actions { display: flex; gap: 16px; font-family: Roboto, sans-serif; }
.actions button { height: 72px; padding: 0 40px 0 36px; gap: 18px; border: 2px solid #747775; border-radius: 36px; font-size: 30px; }
.actions button + button { padding: 0 32px 0 26px; }
.notice { margin: 60px 0 0 104px; height: 62px; padding-left: 16px; line-height: 58px; border: 2px solid #e4e4e4; background: #f5f5f5; }
.notice a { color: #3056a8; }

/* Add-on rail */
.addons { display: flex; flex-direction: column; align-items: center; padding: 28px 0 32px 2px; }
.addons button { width: 56px; height: 56px; margin-bottom: 56px; }
.addons hr { width: 40px; height: 2px; margin: 4px 0 60px; border: 0; background: #dcdee1; }
.addons .hide { margin: auto 0 -4px; }

/* Desktop and dock */
.desktop { position: relative; height: 112px; flex: none; display: flex; justify-content: center; align-items: flex-start; padding-top: 2px; }
.wallpaper { position: absolute; inset: 0; width: 100%; height: 100%; }
.dock {
  position: relative;
  display: flex;
  align-items: center;
  height: 100px;
  padding: 0 5px 4px 3px;
  border: 2px solid #66556b;
  border-radius: 30px;
  background: linear-gradient(90deg, #432c3c, #44303f 15%, #3a2b42 40%, #2c1b2e 56%, #33203b 66%, #3b203f 85%, #2e1a31);
  box-shadow: 0 0 60px 10px rgba(0, 0, 0, .28);
  font-family: Inter, sans-serif;
}
.dock button { position: relative; width: 82px; height: 92px; }
.dock svg { width: 64px; height: 64px; }
.dock .large { width: 70px; height: 74px; }
.dock > i { width: 2px; height: 72px; margin: 0 17px; background: #6a566e; }
.run::after { content: ""; position: absolute; bottom: 0; width: 8px; height: 8px; border-radius: 50%; background: #c2adc5; }
.badge { position: absolute; top: 6px; right: 1px; width: 28px; height: 28px; border-radius: 50%; background: #ec5545; color: #fff; font-size: 19px; line-height: 28px; }
.serif { font-family: "Liberation Serif", serif; }
.mono { font-family: "Liberation Mono", monospace; }
```
